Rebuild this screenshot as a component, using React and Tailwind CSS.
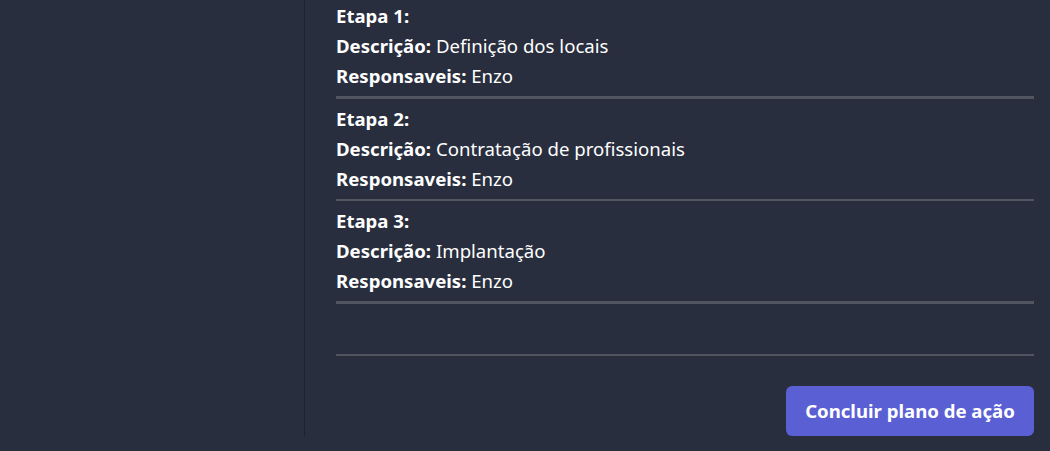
import React from "react"

const etapas = [
  { n: 1, descricao: "Definição dos locais", responsaveis: "Enzo" },
  { n: 2, descricao: "Contratação de profissionais", responsaveis: "Enzo" },
  { n: 3, descricao: "Implantação", responsaveis: "Enzo" },
]

const Etapa = ({ etapa }) => (
  <div>
    <div className="text-[18.6px] leading-[30px] text-white">
      <p className="font-bold">Etapa {etapa.n}:</p>
      <p>
        <span className="font-bold">Descrição:</span> {etapa.descricao}
      </p>
      <p>
        <span className="font-bold">Responsaveis:</span> {etapa.responsaveis}
      </p>
    </div>
    <div className="h-[2.5px] bg-[#50555f] mt-[5px] mb-[5px]" />
  </div>
)

export default function App() {
  return (
    <div
      className="flex w-full h-[451px] bg-[#282e3e] overflow-hidden"
      style={{ fontFamily: '"Noto Sans", "Open Sans", sans-serif' }}
    >
      <aside className="w-[305px] shrink-0 h-[436px] border-r border-[#1e222d]" />
      <main className="flex-1 h-[436px] flex flex-col pl-[30px] pr-[16px] pt-[1px]">
        <div className="pl-[1px] flex flex-col">
          {etapas.map((e) => (
            <Etapa key={e.n} etapa={e} />
          ))}
        </div>
        <div className="h-[2px] bg-[#50555f] mt-[45px] ml-[1px]" />
        <div className="flex justify-end mt-auto">
          <button
            type="button"
            className="w-[248px] h-[50px] rounded-[6px] bg-[#5a5fd4] text-white text-[18.6px] font-bold cursor-pointer"
          >
            Concluir plano de ação
          </button>
        </div>
      </main>
    </div>
  )
}
